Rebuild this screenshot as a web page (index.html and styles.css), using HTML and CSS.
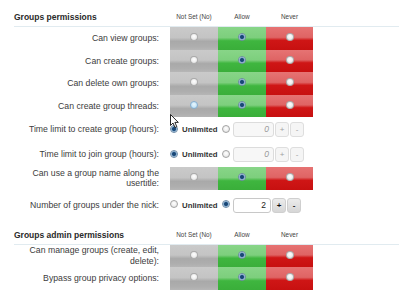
FILE: index.html
```html
<!DOCTYPE html>
<html>
<head>
<meta charset="utf-8">
<link rel="stylesheet" href="styles.css">
</head>
<body>
<div class="page">
  <div class="sec-head">
    <div class="title">Groups permissions</div>
    <div class="col-h">Not Set (No)</div>
    <div class="col-h">Allow</div>
    <div class="col-h">Never</div>
  </div>
  <div class="row bar-row">
    <div class="label">Can view groups:</div>
    <div class="bars"><div class="cell gray"><span class="radio"></span></div><div class="cell green"><span class="radio on"></span></div><div class="cell red"><span class="radio"></span></div></div>
  </div>
  <div class="row bar-row">
    <div class="label">Can create groups:</div>
    <div class="bars"><div class="cell gray"><span class="radio"></span></div><div class="cell green"><span class="radio on"></span></div><div class="cell red"><span class="radio"></span></div></div>
  </div>
  <div class="row bar-row">
    <div class="label">Can delete own groups:</div>
    <div class="bars"><div class="cell gray"><span class="radio"></span></div><div class="cell green"><span class="radio on"></span></div><div class="cell red"><span class="radio"></span></div></div>
  </div>
  <div class="row bar-row">
    <div class="label">Can create group threads:</div>
    <div class="bars"><div class="cell gray"><span class="radio hover"></span></div><div class="cell green"><span class="radio on"></span></div><div class="cell red"><span class="radio"></span></div></div>
  </div>
  <div class="row opt-row">
    <div class="label">Time limit to create group (hours):</div>
    <div class="opts">
      <span class="radio on"></span><span class="unl">Unlimited</span>
      <span class="radio r2"></span>
      <span class="num disabled">0</span><span class="btn disabled">+</span><span class="btn disabled">-</span>
    </div>
  </div>
  <div class="row opt-row">
    <div class="label">Time limit to join group (hours):</div>
    <div class="opts">
      <span class="radio on"></span><span class="unl">Unlimited</span>
      <span class="radio r2"></span>
      <span class="num disabled">0</span><span class="btn disabled">+</span><span class="btn disabled">-</span>
    </div>
  </div>
  <div class="row bar-row">
    <div class="label two">Can use a group name along the usertitle:</div>
    <div class="bars"><div class="cell gray"><span class="radio"></span></div><div class="cell green"><span class="radio on"></span></div><div class="cell red"><span class="radio"></span></div></div>
  </div>
  <div class="row opt-row last">
    <div class="label">Number of groups under the nick:</div>
    <div class="opts">
      <span class="radio"></span><span class="unl">Unlimited</span>
      <span class="radio r2 on"></span>
      <span class="num active">2</span><span class="btn active">+</span><span class="btn active">-</span>
    </div>
  </div>

  <div class="sec-head">
    <div class="title">Groups admin permissions</div>
    <div class="col-h">Not Set (No)</div>
    <div class="col-h">Allow</div>
    <div class="col-h">Never</div>
  </div>
  <div class="row bar-row">
    <div class="label two">Can manage groups (create, edit, delete):</div>
    <div class="bars"><div class="cell gray"><span class="radio"></span></div><div class="cell green"><span class="radio on"></span></div><div class="cell red"><span class="radio"></span></div></div>
  </div>
  <div class="row bar-row">
    <div class="label">Bypass group privacy options:</div>
    <div class="bars"><div class="cell gray"><span class="radio"></span></div><div class="cell green"><span class="radio on"></span></div><div class="cell red"><span class="radio"></span></div></div>
  </div>

  <svg class="cursor" width="10" height="15" viewBox="0 0 10 15"><path d="M0.5 0.5 L0.5 11.5 L3 9 L5 13.5 L6.8 12.7 L4.9 8.4 L8.3 8.4 Z" fill="#fff" stroke="#111" stroke-width="0.9" stroke-linejoin="round"/></svg>
</div>
</body>
</html>
```
FILE: styles.css
```css
html, body {
  margin: 0;
  padding: 0;
  background: #ffffff;
}
.page {
  position: relative;
  padding-left: 14px;
  font-family: "Liberation Sans", Arial, sans-serif;
  color: #3a3a3a;
}
.sec-head {
  display: flex;
  align-items: flex-end;
  height: 26px;
  border-bottom: 1px solid #e1ebf0;
}
.title {
  width: 156px;
  font-weight: bold;
  font-size: 8.5px;
  color: #2a2a2a;
  padding-bottom: 4px;
}
.col-h {
  width: 48px;
  text-align: center;
  font-size: 6.4px;
  color: #444;
  padding-bottom: 6px;
}
.col-h:last-child { width: 47px; }
.row {
  display: grid;
  grid-template-columns: 156px auto;
  align-items: center;
}
.bar-row { height: 22.5px; }
.label {
  text-align: right;
  padding-right: 11px;
  font-size: 8.7px;
  line-height: 10.5px;
  color: #3c3c3c;
}
.bars {
  display: flex;
  height: 22.5px;
}
.cell {
  width: 48px;
  display: flex;
  justify-content: center;
  align-items: flex-start;
  padding-top: 6px;
  box-sizing: border-box;
}
.cell.red { width: 47px; }
.gray { background: linear-gradient(#cacaca 0%, #c4c4c4 46%, #a9a9a9 62%, #aeaeae 85%, #b6b6b6 100%); }
.green { background: linear-gradient(#88d588 0%, #7dcf7d 46%, #3fb63f 60%, #3aae3a 100%); }
.red { background: linear-gradient(#e67373 0%, #df6464 45%, #cf1616 58%, #c71010 100%); }
.radio {
  display: inline-block;
  width: 8px;
  height: 8px;
  border-radius: 50%;
  box-sizing: border-box;
  border: 1px solid #a4a4a4;
  background: radial-gradient(circle at 50% 40%, #ffffff 0, #ececec 60%, #d2d2d2 100%);
  flex: none;
}
.cell .radio { border-color: rgba(120,120,120,0.55); }
.radio.on {
  border-color: #6d8aa6;
  background: radial-gradient(circle, #173f68 0, #1f4f80 1.6px, #7aa6cc 2.4px, #e4ecf3 3.2px);
}
.radio.hover {
  border-color: #86aed0;
  background: radial-gradient(circle at 50% 40%, #eaf6fd 0, #c6e6f8 60%, #a9d4ee 100%);
}
.opt-row { height: 25px; }
.opt-row.last { margin-top: 3px; }
.opts {
  display: flex;
  align-items: center;
}
.opts > .radio { position: relative; top: -1px; }
.unl {
  font-weight: bold;
  font-size: 7.8px;
  color: #333;
  margin-left: 4px;
  width: 40px;
}
.r2 { margin-right: 3px; }
.num {
  box-sizing: border-box;
  width: 41px;
  height: 15px;
  border: 1px solid #dcdcdc;
  border-radius: 3px;
  text-align: right;
  padding-right: 4px;
  font-size: 8.5px;
  line-height: 13px;
  margin-right: 1px;
}
.num.disabled {
  background: #f7f7f7;
  color: #9a9a9a;
  font-style: italic;
}
.num.active {
  width: 38px;
  background: #ffffff;
  border-color: #c8c8c8;
  color: #222;
}
.btn {
  box-sizing: border-box;
  width: 14px;
  height: 15px;
  border: 1px solid #dedede;
  border-radius: 3px;
  text-align: center;
  font-size: 8px;
  line-height: 13px;
  margin-right: 1px;
}
.btn.disabled {
  background: #f5f5f5;
  color: #a0a0a0;
}
.btn.active {
  background: linear-gradient(#ececec, #d6d6d6);
  border-color: #cfcfcf;
  color: #111;
  font-weight: bold;
}
.cursor {
  position: absolute;
  left: 170px;
  top: 114px;
}
```
